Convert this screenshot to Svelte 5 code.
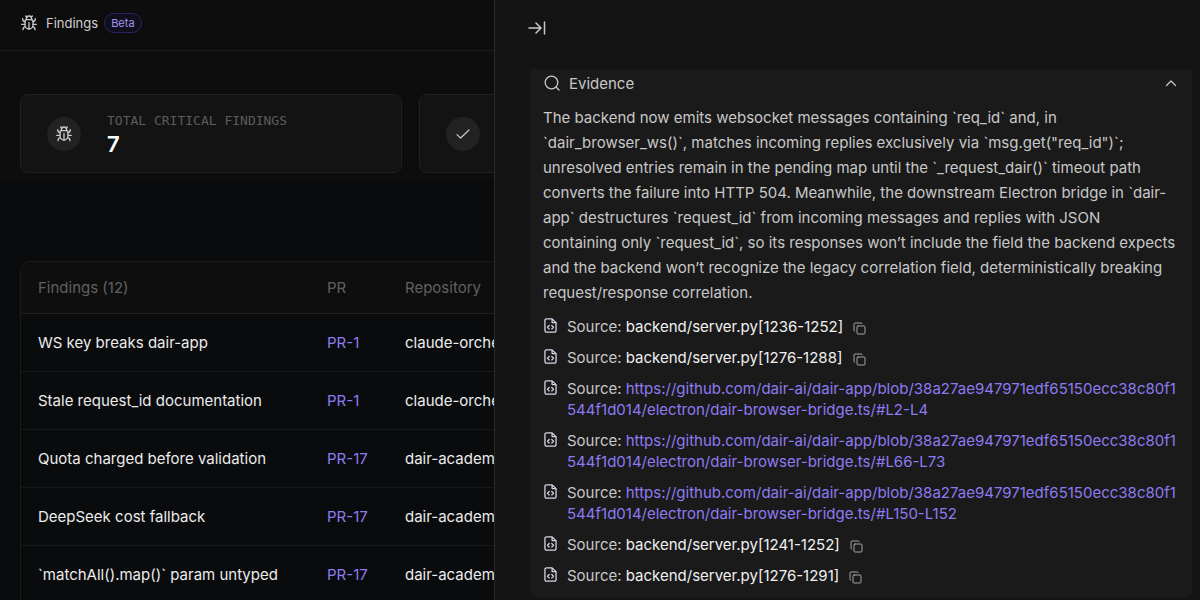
<script>
  const cards = [
    { icon: 'bug', label: 'Total critical findings', value: '7' },
    { icon: 'check', label: '', value: '' },
  ];

  const findings = [
    { title: 'WS key breaks dair-app', pr: 'PR-1', repo: 'claude-orchestrator' },
    { title: 'Stale request_id documentation', pr: 'PR-1', repo: 'claude-orchestrator' },
    { title: 'Quota charged before validation', pr: 'PR-17', repo: 'dair-academy' },
    { title: 'DeepSeek cost fallback', pr: 'PR-17', repo: 'dair-academy' },
    { title: '`matchAll().map()` param untyped', pr: 'PR-17', repo: 'dair-academy' },
  ];

  const bridge =
    'https://github.com/dair-ai/dair-app/blob/38a27ae947971edf65150ecc38c80f1544f1d014/electron/dair-browser-bridge.ts/';

  const sources = [
    { file: 'backend/server.py[1236-1252]' },
    { file: 'backend/server.py[1276-1288]' },
    { url: bridge + '#L2-L4' },
    { url: bridge + '#L66-L73' },
    { url: bridge + '#L150-L152' },
    { file: 'backend/server.py[1241-1252]' },
    { file: 'backend/server.py[1276-1291]' },
  ];

  let open = $state(true);
</script>

{#snippet bug()}
  <svg class="icon" viewBox="0 0 24 24" aria-hidden="true">
    <path d="M8 7V5.500a4 4 0 0 1 8 0V7" />
    <path d="M7 1.500l2 2M17 1.500l-2 2" />
    <path d="M8.500 7h7a2.500 2.500 0 0 1 2.500 2.500V15a6 6 0 0 1-12 0V9.500A2.500 2.500 0 0 1 8.500 7z" />
    <path d="M12 11.500V21" />
    <path d="M6 10C3.800 9.500 2.500 8 2.500 5.500M18 10c2.200-.5 3.500-2 3.500-4.500" />
    <path d="M6 14H1M18 14h5" />
    <path d="M6.500 17.500c-2.200.5-3.500 2-3.500 4.500M17.500 17.500c2.200.5 3.500 2 3.500 4.500" />
  </svg>
{/snippet}

<div class="shell">
  <main>
    <header class="topbar">
      {@render bug()}
      <h1>Findings</h1>
      <span class="beta">Beta</span>
    </header>

    <section class="cards">
      {#each cards as card}
        <article class="card">
          <span class="badge">
            {#if card.icon === 'bug'}
              {@render bug()}
            {:else}
              <svg class="icon check" viewBox="0 0 24 24" aria-hidden="true"><path d="M3 13l5.500 5L21 6" /></svg>
            {/if}
          </span>
          {#if card.value}
            <div>
              <div class="label">{card.label}</div>
              <div class="value">{card.value}</div>
            </div>
          {/if}
        </article>
      {/each}
    </section>

    <div class="table">
      <table>
        <thead>
          <tr><th class="c1">Findings (12)</th><th class="c2">PR</th><th>Repository</th></tr>
        </thead>
        <tbody>
          {#each findings as f}
            <tr>
              <td>{f.title}</td>
              <td><a href="#pr">{f.pr}</a></td>
              <td>{f.repo}</td>
            </tr>
          {/each}
        </tbody>
      </table>
    </div>
  </main>

  <aside>
    <button class="close" aria-label="Close panel">
      <svg viewBox="0 0 18 14" aria-hidden="true"><path d="M1 7h12M8 2l5 5-5 5M16.500 1v12" /></svg>
    </button>

    <section class="evidence">
      <button class="toggle" aria-expanded={open} onclick={() => (open = !open)}>
        <svg class="search" viewBox="0 0 16 16" aria-hidden="true"><circle cx="7.500" cy="7.500" r="6.300" /><path d="M12 12l3 3" /></svg>
        <span>Evidence</span>
        <svg class="chevron" viewBox="0 0 12 8" aria-hidden="true"><path d="M1.500 6.500L6 2l4.500 4.500" /></svg>
      </button>

      {#if open}
        <p>
          The backend now emits websocket messages containing `req_id` and, in `dair_browser_ws()`,
          matches incoming replies exclusively via `msg.get("req_id")`; unresolved entries remain in
          the pending map until the `_request_dair()` timeout path converts the failure into HTTP 504.
          Meanwhile, the downstream Electron bridge in `dair-app` destructures `request_id` from
          incoming messages and replies with JSON containing only `request_id`, so its responses won’t
          include the field the backend expects and the backend won’t recognize the legacy correlation
          field, deterministically breaking request/response correlation.
        </p>

        <ul>
          {#each sources as s}
            <li>
              <svg class="file" viewBox="0 0 12 14" aria-hidden="true">
                <path d="M7.500 .8H2.300A1.500 1.500 0 0 0 .8 2.300v9.400a1.500 1.500 0 0 0 1.500 1.500h7.400a1.500 1.500 0 0 0 1.500-1.500V4.300L7.500 .8v3.500h3.700" />
                <path d="M4.800 7L3.200 8.600l1.600 1.600M7.200 7l1.600 1.600-1.600 1.600" />
              </svg>
              <div class="source">
                Source:
                {#if s.url}
                  <a href={s.url}>{s.url}</a>
                {:else}
                  <span class="path">{s.file}</span>
                  <button class="copy" aria-label="Copy path">
                    <svg viewBox="0 0 13 13" aria-hidden="true">
                      <rect x="4" y="4" width="8" height="8" rx="1" />
                      <path d="M1.700 9.200A1 1 0 0 1 1 8.200V2a1 1 0 0 1 1-1h6.200a1 1 0 0 1 1 .7" />
                    </svg>
                  </button>
                {/if}
              </div>
            </li>
          {/each}
        </ul>
      {/if}
    </section>
  </aside>
</div>

<style>
  :global(body) {
    margin: 0;
    background: #0b0c0e;
  }
  .shell {
    position: relative;
    height: 100vh;
    overflow: hidden;
    font-family: Inter, sans-serif;
    font-size: 15px;
    color: #ececec;
    background: linear-gradient(#0d0d0d 180px, #0a0b0d 180px);
  }
  svg {
    display: block;
    flex: none;
    fill: none;
    stroke: currentColor;
    stroke-linecap: round;
    stroke-linejoin: round;
  }
  button {
    padding: 0;
    border: 0;
    background: none;
    color: inherit;
    font: inherit;
    cursor: pointer;
  }
  a {
    color: #8d7bf2;
    text-decoration: none;
  }
  .icon {
    width: 16px;
    height: 16px;
    stroke-width: 2;
    color: #c8c8c8;
  }
  .check {
    stroke-width: 1.800;
  }
  .topbar {
    display: flex;
    align-items: center;
    height: 51px;
    box-sizing: border-box;
    padding: 0 20px 5px 21px;
    border-bottom: 1px solid #1c1c1c;
  }
  h1 {
    margin: 0 6px 0 9px;
    font-size: 13px;
    font-weight: 400;
    color: #d0d0d0;
  }
  .beta {
    padding: 0 6px;
    border: 1px solid #2d2363;
    border-radius: 10px;
    font-size: 11px;
    line-height: 18px;
    color: #a795f2;
    background: #100e1a;
  }
  .cards {
    display: grid;
    grid-template-columns: repeat(3, 1fr);
    gap: 17px;
    padding: 43px 0 0 20px;
  }
  .card {
    display: flex;
    align-items: center;
    gap: 26px;
    height: 79px;
    padding: 0 26px;
    box-sizing: border-box;
    border: 1px solid #202020;
    border-radius: 8px;
    background: #131313;
  }
  .badge {
    display: grid;
    place-items: center;
    width: 34px;
    height: 34px;
    border-radius: 50%;
    background: #222;
  }
  .label {
    font: 13px/20px "DejaVu Sans Mono", monospace;
    text-transform: uppercase;
    color: #5c5c5c;
  }
  .value {
    font-size: 22px;
    line-height: 26px;
    font-weight: 600;
    color: #fff;
  }
  .table {
    margin: 88px 0 0 20px;
    border: 1px solid #1a1a1a;
    border-radius: 10px 0 0 0;
    overflow: hidden;
  }
  table {
    width: 100%;
    border-collapse: collapse;
    table-layout: fixed;
  }
  th,
  td {
    height: 57px;
    padding: 0 17px;
    border-bottom: 1px solid #17181a;
    text-align: left;
    font-weight: 400;
    white-space: nowrap;
  }
  th {
    height: 51px;
    color: #606060;
    background: #0e0e0e;
    border-color: #1f1f1f;
  }
  th.c1 {
    width: 255px;
  }
  th.c2 {
    width: 44px;
  }
  aside {
    position: absolute;
    inset: 0 0 0 auto;
    width: 706px;
    max-width: 100%;
    box-sizing: border-box;
    padding: 20px 8px 0 35px;
    border-left: 1px solid #2a2a2a;
    background: #141414;
    color: #c8c8c8;
  }
  .close {
    display: block;
    margin-left: -2px;
  }
  .close svg {
    width: 18px;
    height: 16px;
    stroke-width: 1.500;
  }
  .evidence {
    margin-top: 33px;
    padding: 0 12px 12px 13px;
    border-radius: 0 0 8px 8px;
    background: #1a1a1a;
  }
  .toggle {
    display: flex;
    align-items: center;
    gap: 9px;
    width: 100%;
    height: 28px;
    padding: 0 3px 0 1px;
  }
  .search {
    width: 16px;
    height: 16px;
    stroke-width: 1.300;
  }
  .chevron {
    width: 12px;
    height: 8px;
    margin-left: auto;
    stroke-width: 1.300;
  }
  p {
    margin: 8px 0 11px;
    padding-right: 3px;
    line-height: 25px;
  }
  ul {
    display: grid;
    gap: 10px;
    margin: 0;
    padding: 0;
    list-style: none;
  }
  li {
    display: flex;
    gap: 9px;
    line-height: 21px;
  }
  .file {
    width: 15px;
    height: 15px;
    margin-top: 2px;
    stroke-width: 1.200;
    color: #d4d6e6;
  }
  .source {
    min-width: 0;
    overflow-wrap: anywhere;
    word-break: break-all;
  }
  .path {
    color: #f0f0f0;
  }
  .copy {
    margin-left: 6px;
    vertical-align: -3px;
    color: #a4a4a4;
  }
  .copy svg {
    width: 13px;
    height: 13px;
  }
</style>
